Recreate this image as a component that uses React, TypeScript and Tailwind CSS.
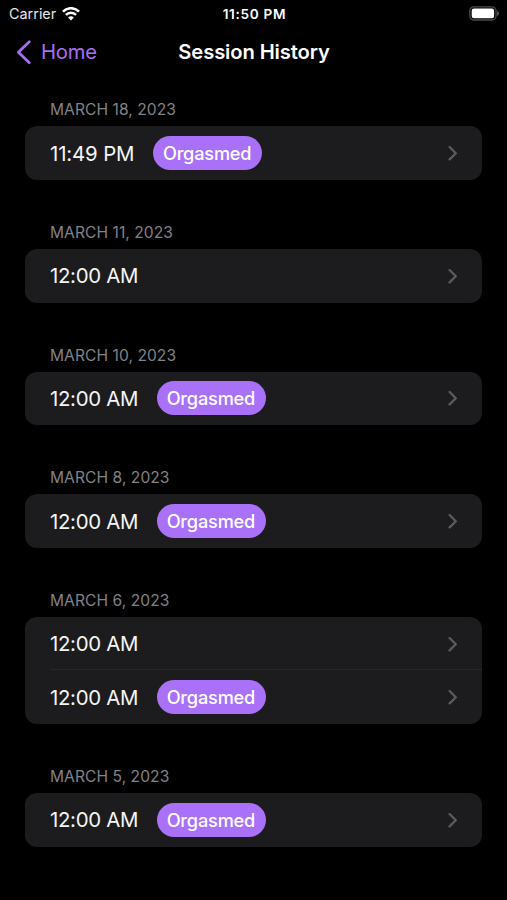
type Session = { time: string; tag?: string };
type Day = { date: string; sessions: Session[] };

const days: Day[] = [
  { date: "March 18, 2023", sessions: [{ time: "11:49 PM", tag: "Orgasmed" }] },
  { date: "March 11, 2023", sessions: [{ time: "12:00 AM" }] },
  { date: "March 10, 2023", sessions: [{ time: "12:00 AM", tag: "Orgasmed" }] },
  { date: "March 8, 2023", sessions: [{ time: "12:00 AM", tag: "Orgasmed" }] },
  { date: "March 6, 2023", sessions: [{ time: "12:00 AM" }, { time: "12:00 AM", tag: "Orgasmed" }] },
  { date: "March 5, 2023", sessions: [{ time: "12:00 AM", tag: "Orgasmed" }] },
];

function Wifi() {
  return (
    <svg width="18" height="14" viewBox="0 0 18 14" fill="none" stroke="#fff" strokeWidth="2.5">
      <path d="M0.9 4.7C5.4 0 12.6 0 17.1 4.7" />
      <path d="M3.9 7.9C6.8 5 11.2 5 14.1 7.9" />
      <path d="M9 13.4L6.1 10.5C7.7 8.9 10.3 8.9 11.9 10.5Z" fill="#fff" stroke="none" />
    </svg>
  );
}

function Battery() {
  return (
    <svg width="31" height="15" viewBox="0 0 31 15" fill="none">
      <rect x="0.8" y="0.8" width="26.2" height="13.2" rx="4" stroke="#4c4c4c" strokeWidth="1.3" />
      <rect x="2.7" y="2.6" width="22.4" height="9.6" rx="2.2" fill="#fff" />
      <path d="M28.2 5.1C30.6 5.9 30.6 9.1 28.2 9.9Z" fill="#5c5c5c" />
    </svg>
  );
}

function Row({ time, tag }: Session) {
  return (
    <div className="flex h-[53.6px] items-center pr-[24.5px]">
      <span className={`pt-[1.6px] text-[20.4px] leading-none text-[#f5f5f5] ${time.startsWith("11") ? "tracking-[-0.13px]" : "tracking-[-0.3px]"}`}>{time}</span>
      {tag && (
        <span className="ml-[18.5px] flex h-[34px] w-[109.5px] items-center justify-center rounded-full bg-[#a970f8] pr-px text-[18.2px] font-medium leading-none tracking-[-0.2px] text-white">
          {tag}
        </span>
      )}
      <svg className="ml-auto" width="10" height="16" viewBox="0 0 10 16" fill="none" stroke="#5b5b5f" strokeWidth="2.3" strokeLinecap="round" strokeLinejoin="round">
        <path d="M1.6 2L7.8 8.2L1.6 14.4" />
      </svg>
    </div>
  );
}

export default function App() {
  return (
    <div className="h-[900px] w-full overflow-hidden bg-black font-['Inter',sans-serif] text-white">
      <div className="grid h-[28px] grid-cols-3 items-center pl-[9px] pr-[7px]">
        <div className="flex items-center gap-[6px]">
          <span className="text-[14.4px] leading-none text-[#e6e6e6]">Carrier</span>
          <Wifi />
        </div>
        <span className="pt-px text-center text-[13.6px] font-semibold leading-none tracking-[0.7px]">11:50 PM</span>
        <div className="flex justify-end pb-px">
          <Battery />
        </div>
      </div>
      <div className="grid h-[48px] grid-cols-[1fr_auto_1fr] items-center pl-[16px] pr-[15px]">
        <div className="flex items-center gap-[9px] text-[#a86ef5]">
          <svg width="16" height="26" viewBox="0 0 16 26" fill="none" stroke="currentColor" strokeWidth="2.7" strokeLinecap="round" strokeLinejoin="round">
            <path d="M13.3 2.7L2.4 13.2L13.3 23.7" />
          </svg>
          <span className="pt-px text-[20.2px] leading-none tracking-[-0.15px]">Home</span>
        </div>
        <h1 className="pt-px text-[20.2px] font-semibold leading-none tracking-[-0.12px]">Session History</h1>
        <div />
      </div>
      <main className="flex flex-col gap-[44px] pl-[25.2px] pr-[25px] pt-[25.4px]">
        {days.map((day) => (
          <section key={day.date}>
            <h2 className="h-[25px] pl-[24.8px] text-[15.6px] leading-[17px] tracking-[0.05px] uppercase text-[#828287]">{day.date}</h2>
            <div className="rounded-[12px] bg-[#1c1c1e] pl-[24.8px]">
              {day.sessions.map((session, i) => (
                <div key={i} className={i > 0 ? "shadow-[0_-1px_0_#28282a]" : ""}>
                  <Row {...session} />
                </div>
              ))}
            </div>
          </section>
        ))}
      </main>
    </div>
  );
}
